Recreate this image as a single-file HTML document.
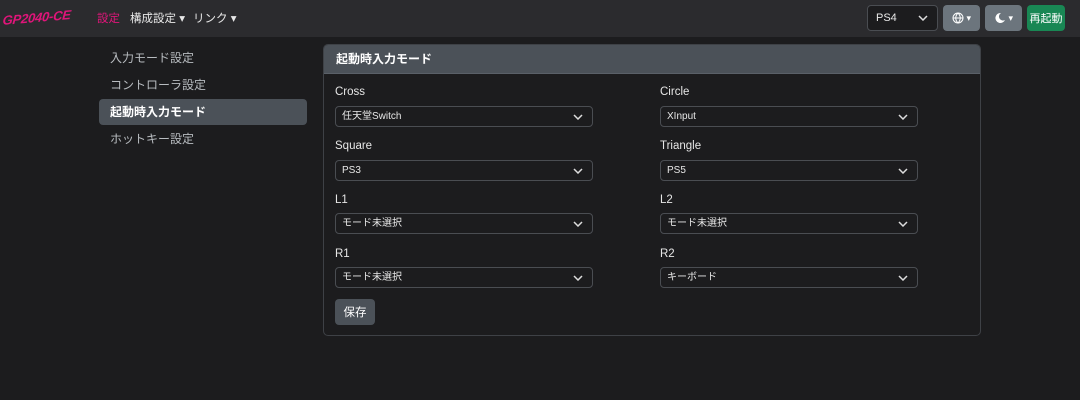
<!DOCTYPE html>
<html><head><meta charset="utf-8"><style>
*{box-sizing:border-box;margin:0;padding:0}
body{width:1080px;height:400px;background:#1c1c1e;font-family:"Liberation Sans","Noto Sans CJK JP",sans-serif;color:#dee2e6;font-size:12px;position:relative;overflow:hidden}
.nav{position:absolute;left:0;top:0;width:1080px;height:37px;background:#2b2b2e}
.logo{position:absolute;left:3px;top:10px;color:#e0157a;font-style:italic;font-weight:bold;font-size:13px;transform:skew(-10deg) rotate(-5deg);letter-spacing:-0.3px}
.nl{position:absolute;top:10px;font-size:11.5px;color:#e8e8e8}
.sel{position:absolute;background:#1c1c1e;border:1px solid #4a4d52;border-radius:4px;color:#e8e8e8;font-size:10px;padding-left:6px;line-height:20px;height:21px}
.sel svg{position:absolute;right:9px;top:50%;margin-top:-3px}
.btn{position:absolute;border-radius:4px;display:flex;align-items:center;justify-content:center;color:#fff}
.side{position:absolute;left:99px;width:208px;height:26px;line-height:26px;padding-left:11px;font-size:12px;color:#b8bcc0;border-radius:4px}
.card{position:absolute;left:323px;top:44px;width:658px;height:292px;border:1px solid #3e4146;border-radius:5px;background:#1c1c1e;overflow:hidden}
.ch{height:29px;background:#4b5158;border-bottom:1px solid #5a6068;color:#fff;font-weight:bold;font-size:12px;line-height:28px;padding-left:12px}
.lbl{position:absolute;font-size:11.5px;color:#e6e6e6}
</style></head><body>
<div class="nav">
<div class="logo">GP2040-CE</div>
<div class="nl" style="left:97px;color:#e0157a">設定</div>
<div class="nl" style="left:130px">構成設定 ▾</div>
<div class="nl" style="left:193px">リンク ▾</div>
<div class="sel" style="left:867px;top:5px;width:71px;height:26px;line-height:24px;font-size:11px;padding-left:8px">PS4<svg width="10" height="6" viewBox="0 0 10 6"><path d="M1 1l4 4 4-4" stroke="#ddd" stroke-width="1.5" fill="none"/></svg></div>
<div class="btn" style="left:943px;top:5px;width:37px;height:26px;background:#6c757d;font-size:9px">
<svg width="12" height="12" viewBox="0 0 12 12"><circle cx="6" cy="6" r="5" stroke="#fff" fill="none"/><path d="M1 6h10M6 1c-3 3-3 7 0 10M6 1c3 3 3 7 0 10" stroke="#fff" fill="none"/></svg>&nbsp;▾</div>
<div class="btn" style="left:985px;top:5px;width:37px;height:26px;background:#6c757d;font-size:9px">
<svg width="12" height="12" viewBox="0 0 12 12"><path d="M7 1a5 5 0 1 0 4 7a4 4 0 0 1-4-7z" fill="#fff"/></svg>&nbsp;▾</div>
<div class="btn" style="left:1027px;top:5px;width:38px;height:26px;background:#198754;font-size:11px">再起動</div>
</div>
<div class="side" style="top:45px">入力モード設定</div>
<div class="side" style="top:72px">コントローラ設定</div>
<div class="side" style="top:99px;background:#4b5158;color:#fff;font-weight:bold">起動時入力モード</div>
<div class="side" style="top:126px">ホットキー設定</div>
<div class="card"><div class="ch">起動時入力モード</div></div>
<div class="lbl" style="left:335px;top:86px">Cross</div>
<div class="lbl" style="left:660px;top:86px">Circle</div>
<div class="lbl" style="left:335px;top:140px">Square</div>
<div class="lbl" style="left:660px;top:140px">Triangle</div>
<div class="lbl" style="left:335px;top:194px">L1</div>
<div class="lbl" style="left:660px;top:194px">L2</div>
<div class="lbl" style="left:335px;top:248px">R1</div>
<div class="lbl" style="left:660px;top:248px">R2</div>
<div class="sel" style="left:335px;top:106px;width:258px">任天堂Switch<svg width="10" height="6" viewBox="0 0 10 6"><path d="M1 1l4 4 4-4" stroke="#ddd" stroke-width="1.5" fill="none"/></svg></div>
<div class="sel" style="left:660px;top:106px;width:258px">XInput<svg width="10" height="6" viewBox="0 0 10 6"><path d="M1 1l4 4 4-4" stroke="#ddd" stroke-width="1.5" fill="none"/></svg></div>
<div class="sel" style="left:335px;top:160px;width:258px">PS3<svg width="10" height="6" viewBox="0 0 10 6"><path d="M1 1l4 4 4-4" stroke="#ddd" stroke-width="1.5" fill="none"/></svg></div>
<div class="sel" style="left:660px;top:160px;width:258px">PS5<svg width="10" height="6" viewBox="0 0 10 6"><path d="M1 1l4 4 4-4" stroke="#ddd" stroke-width="1.5" fill="none"/></svg></div>
<div class="sel" style="left:335px;top:213px;width:258px">モード未選択<svg width="10" height="6" viewBox="0 0 10 6"><path d="M1 1l4 4 4-4" stroke="#ddd" stroke-width="1.5" fill="none"/></svg></div>
<div class="sel" style="left:660px;top:213px;width:258px">モード未選択<svg width="10" height="6" viewBox="0 0 10 6"><path d="M1 1l4 4 4-4" stroke="#ddd" stroke-width="1.5" fill="none"/></svg></div>
<div class="sel" style="left:335px;top:267px;width:258px">モード未選択<svg width="10" height="6" viewBox="0 0 10 6"><path d="M1 1l4 4 4-4" stroke="#ddd" stroke-width="1.5" fill="none"/></svg></div>
<div class="sel" style="left:660px;top:267px;width:258px">キーボード<svg width="10" height="6" viewBox="0 0 10 6"><path d="M1 1l4 4 4-4" stroke="#ddd" stroke-width="1.5" fill="none"/></svg></div>
<div class="btn" style="left:335px;top:299px;width:40px;height:26px;background:#4b5158;font-size:11.5px">保存</div>
</body></html>
